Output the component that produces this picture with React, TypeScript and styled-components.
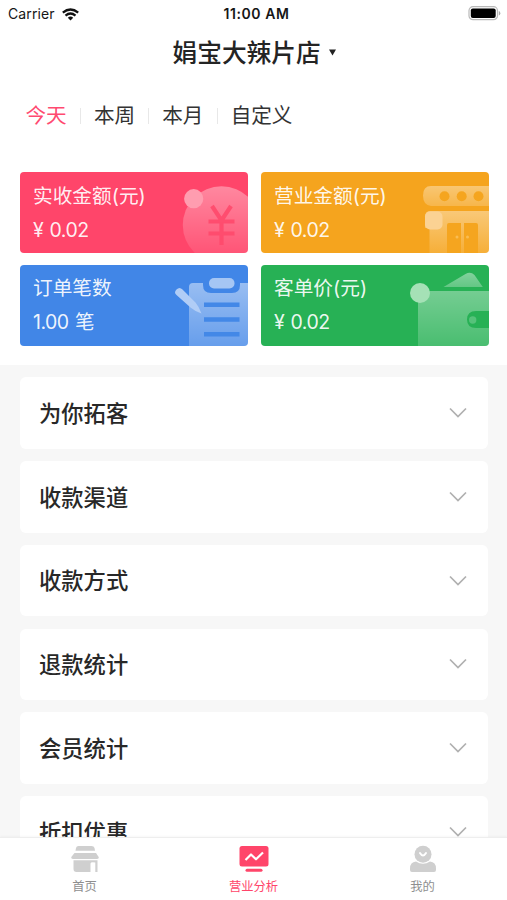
import React from "react";
import styled, { createGlobalStyle } from "styled-components";

const GlobalStyle = createGlobalStyle`
  * { box-sizing: border-box; }
  body {
    margin: 0;
    background: #fff;
    font-family: Inter, "Noto Sans CJK SC", sans-serif;
  }
`;

const Screen = styled.div`
  width: 507px;
  height: 900px;
  overflow: hidden;
  display: flex;
  flex-direction: column;
  background: #fff;
`;

const StatusBar = styled.div`
  height: 28px;
  flex: none;
  display: grid;
  grid-template-columns: 1fr auto 1fr;
  align-items: center;
  padding: 0 6px 2px 8px;
  color: #161616;
`;

const Carrier = styled.div`
  display: flex;
  align-items: center;
  gap: 7px;
  font-size: 14px;
  letter-spacing: 0.1px;
  line-height: 26px;
  padding-top: 1px;
`;

const Clock = styled.div`
  font-size: 14px;
  font-weight: 600;
  letter-spacing: 0.6px;
  line-height: 26px;
  padding-left: 4px;
`;

const BatterySlot = styled.div`
  display: flex;
  justify-content: flex-end;
`;

const TitleBar = styled.header`
  height: 48px;
  flex: none;
  display: flex;
  align-items: center;
  padding: 1px 0 0 172.5px;
  gap: 8px;
  color: #242424;
`;

const Title = styled.h1`
  margin: 0;
  font-size: 24.7px;
  font-weight: 500;
  line-height: 48px;
`;

const PeriodTabs = styled.nav`
  height: 80px;
  flex: none;
  display: flex;
  align-items: center;
  padding-left: 25.5px;
`;

const Period = styled.span<{ $active?: boolean }>`
  font-size: 20.6px;
  line-height: 30px;
  color: ${(p) => (p.$active ? "#ff4a70" : "#333")};
`;

const Divider = styled.i`
  width: 1px;
  height: 16px;
  margin: 0 13.1px;
  background: #e8e8e8;
`;

const Cards = styled.section`
  height: 209px;
  flex: none;
  padding: 16px 18px 0 20px;
  display: grid;
  grid-template-columns: 228px 228px;
  grid-template-rows: 81px 81px;
  gap: 12px 13px;
`;

const Card = styled.div<{ $color: string; $lower: boolean }>`
  position: relative;
  overflow: hidden;
  border-radius: 4px;
  padding: ${(p) => (p.$lower ? "8px" : "9px")} 13px 0;
  background: ${(p) => p.$color};
  color: rgba(255, 255, 255, 0.93);
`;

const CardLabel = styled.div`
  font-size: 19.7px;
  line-height: 30px;
  height: 34px;
`;

const CardValue = styled.div`
  font-size: 19.5px;
  line-height: 30px;
  letter-spacing: -0.5px;
  word-spacing: 1.3px;
`;

const Art = styled.svg`
  position: absolute;
  inset: 0;
  width: 228px;
  height: 81px;
`;

const List = styled.main`
  flex: 1;
  min-height: 0;
  overflow: hidden;
  background: #f7f7f7;
  padding: 12.3px 19px 0 20px;
  display: flex;
  flex-direction: column;
  gap: 12.3px;
`;

const Row = styled.div`
  height: 71.5px;
  flex: none;
  display: flex;
  align-items: center;
  justify-content: space-between;
  padding: 0 21px 0 19px;
  border-radius: 6px;
  background: #fff;
`;

const RowLabel = styled.span`
  color: #282828;
  font-size: 22.3px;
  font-weight: 500;
  line-height: 32px;
  padding-top: 1.6px;
`;

const TabBar = styled.footer`
  height: 63px;
  flex: none;
  display: grid;
  grid-template-columns: repeat(3, 1fr);
  background: #fff;
  border-top: 1px solid #eee;
  box-shadow: 0 -1px 2px rgba(0, 0, 0, 0.03);
  position: relative;
`;

const Tab = styled.div<{ $active?: boolean }>`
  display: flex;
  flex-direction: column;
  align-items: center;
  padding-top: 7px;
  font-size: 12.3px;
  line-height: 18px;
  gap: 5px;
  color: ${(p) => (p.$active ? "#ff456a" : "#8f8f8f")};
`;

const Fade = ({ id, from = 0.42, to = 0.08 }: { id: string; from?: number; to?: number }) => (
  <defs>
    <linearGradient id={id} x1="0" y1="0" x2="0" y2="1">
      <stop offset="0" stopColor="#fff" stopOpacity={from} />
      <stop offset="1" stopColor="#fff" stopOpacity={to} />
    </linearGradient>
  </defs>
);

const CoinArt = () => (
  <Art viewBox="0 0 228 81">
    <Fade id="coin" from={0.36} to={0.04} />
    <circle cx="201.5" cy="53" r="38.7" fill="url(#coin)" />
    <circle cx="173.7" cy="26.7" r="9.6" fill="#ff9db0" />
    <path d="M192 34l9.5 14.5L211 34M188.5 49.5h26M188.5 61.5h26M201.5 49v24" fill="none" stroke="#ff496c" strokeOpacity=".9" strokeWidth="4.2" />
  </Art>
);

const ShopArt = () => (
  <Art viewBox="0 0 228 81">
    <Fade id="shop" from={0.38} to={0.2} />
    <Fade id="shopBody" from={0.4} to={0.12} />
    <path d="M228 14h-58q-8 0-8 9.5t8 10.5h58z" fill="url(#shop)" />
    <g fill="#f5a51f">
      <circle cx="183.5" cy="24.2" r="5" />
      <circle cx="200.7" cy="24.2" r="5" />
      <circle cx="217.5" cy="24.2" r="5" />
    </g>
    <path d="M228 39h-59q-5 0-5 6v11h4.500v25H228z" fill="url(#shopBody)" />
    <path d="M186 53q0-2 2-2h12v30h-14zM203 51h12q2 0 2 2v28h-14z" fill="#f5a51f" />
    <circle cx="196" cy="65" r="1.500" fill="#f9bd54" />
    <circle cx="206.500" cy="65" r="1.500" fill="#f9bd54" />
    <rect x="164" y="39.500" width="17.500" height="18" rx="5" fill="#fbd293" />
  </Art>
);

const ClipboardArt = () => (
  <Art viewBox="0 0 228 81">
    <Fade id="board" from={0.46} to={0.2} />
    <path d="M169 81V22q0-4 4-4h10v2q0 8 8 8h21q8 0 8-8v-2h8v63z" fill="url(#board)" />
    <rect x="189" y="13" width="25.500" height="10.500" rx="5" fill="#a5c6f4" />
    <path d="M184 39.700h35.500M184 54.500h35.500M184 69.200h35.500" stroke="#4388e7" strokeWidth="4.600" />
    <path d="M156.500 24.500q3-3 6 0l13 13q3.500 4 6 11-7-2.500-11-6L156.500 30q-3-2.500 0-5.500z" fill="#b1cdf6" />
  </Art>
);

const WalletArt = () => (
  <Art viewBox="0 0 228 81">
    <Fade id="flap" from={0.42} to={0.28} />
    <Fade id="wallet" from={0.36} to={0.16} />
    <path d="M182.500 22l22-13q5-3 9 1l8.300 12z" fill="url(#flap)" />
    <path d="M157 81V26h71v20h-13q-9 0-9 8.500t9 8.500h13v18z" fill="url(#wallet)" />
    <circle cx="211.700" cy="55" r="3.700" fill="#56c27a" />
    <circle cx="159" cy="28" r="10" fill="#a5e1b6" />
  </Art>
);

const Chevron = () => (
  <svg width="18" height="12" viewBox="0 0 18 12" fill="none" stroke="#b0b0b0" strokeWidth="1.7">
    <path d="M1 1.500l8 8 8-8" />
  </svg>
);

const WifiIcon = () => (
  <svg width="17" height="13" viewBox="0 0 17 13">
    <g fill="none" stroke="#111" strokeWidth="2.300">
      <path d="M.8 4.600q7.700-6.200 15.400 0" />
      <path d="M3.500 7.600q5-4.100 10 0" />
    </g>
    <path d="M5.800 9.700q2.700-2.200 5.400 0L8.500 12.500z" fill="#111" />
  </svg>
);

const BatteryIcon = () => (
  <svg width="33" height="15" viewBox="0 0 33 15">
    <rect x="1" y=".7" width="28.500" height="13" rx="4" fill="#fff" stroke="#b9b9b9" strokeWidth="1.200" />
    <rect x="2.800" y="2.500" width="24.900" height="9.400" rx="2" fill="#000" />
    <path d="M30.800 5v4.500q1.500-.5 1.500-2.250T30.800 5z" fill="#aaa" />
  </svg>
);

const HomeIcon = () => (
  <svg width="28" height="28" viewBox="0 0 28 28" fill="#cfcfcf">
    <path d="M7.500 1h13q2.500 0 3 2l.5 2.800H4.500L5 3q.5-2 2.500-2z" />
    <path d="M3.500 8h21.500l2.500 3.700q1 2.300-2 2.300h-23q-3 0-2-2.300z" />
    <path d="M2.500 15.300h24V27H24.300v-9.500q-4.800-.8-4.800 1V27H5.500q-3 0-3-3z" />
  </svg>
);

const ChartIcon = () => (
  <svg width="30" height="28" viewBox="0 0 30 28">
    <rect x=".5" y="1" width="29" height="20.500" rx="2.500" fill="#ff456a" />
    <path d="M6.500 15l5.500-5.500 5 4.800L24 7.500" fill="none" stroke="#fff" strokeWidth="2.200" strokeLinejoin="round" />
    <path d="M8 25.300h14" stroke="#ff456a" strokeWidth="3" strokeLinecap="round" />
  </svg>
);

const UserIcon = () => (
  <svg width="28" height="28" viewBox="0 0 28 28" fill="#cfcfcf">
    <circle cx="14" cy="9.300" r="8.500" />
    <path d="M1 25v-1.500Q1 17 7 16.500q7 4.500 14 0 6 .5 6 7V25q0 2-2 2H3q-2 0-2-2z" />
    <path d="M11 8q3 5 6 0" fill="none" stroke="#fff" strokeWidth="2" strokeLinecap="round" />
  </svg>
);

const stats = [
  { label: "实收金额(元)", value: "¥ 0.02", color: "#ff456a", Picture: CoinArt },
  { label: "营业金额(元)", value: "¥ 0.02", color: "#f5a41e", Picture: ShopArt },
  { label: "订单笔数", value: "1.00 笔", color: "#4186e7", Picture: ClipboardArt },
  { label: "客单价(元)", value: "¥ 0.02", color: "#27b155", Picture: WalletArt },
];

const periods = ["今天", "本周", "本月", "自定义"];
const sections = ["为你拓客", "收款渠道", "收款方式", "退款统计", "会员统计", "折扣优惠"];

export default function App() {
  return (
    <Screen>
      <GlobalStyle />
      <StatusBar>
        <Carrier>Carrier <WifiIcon /></Carrier>
        <Clock>11:00 AM</Clock>
        <BatterySlot><BatteryIcon /></BatterySlot>
      </StatusBar>
      <TitleBar>
        <Title>娟宝大辣片店</Title>
        <svg width="7" height="7" viewBox="0 0 7 7"><path d="M0 .5h7L3.500 6.500z" fill="#222" /></svg>
      </TitleBar>
      <PeriodTabs>
        {periods.map((name, i) => (
          <React.Fragment key={name}>
            {i > 0 && <Divider />}
            <Period $active={i === 0}>{name}</Period>
          </React.Fragment>
        ))}
      </PeriodTabs>
      <Cards>
        {stats.map(({ label, value, color, Picture }, i) => (
          <Card key={label} $color={color} $lower={i > 1}>
            <Picture />
            <CardLabel>{label}</CardLabel>
            <CardValue>{value}</CardValue>
          </Card>
        ))}
      </Cards>
      <List>
        {sections.map((name) => (
          <Row key={name}>
            <RowLabel>{name}</RowLabel>
            <Chevron />
          </Row>
        ))}
      </List>
      <TabBar>
        <Tab><HomeIcon />首页</Tab>
        <Tab $active><ChartIcon />营业分析</Tab>
        <Tab><UserIcon />我的</Tab>
      </TabBar>
    </Screen>
  );
}
